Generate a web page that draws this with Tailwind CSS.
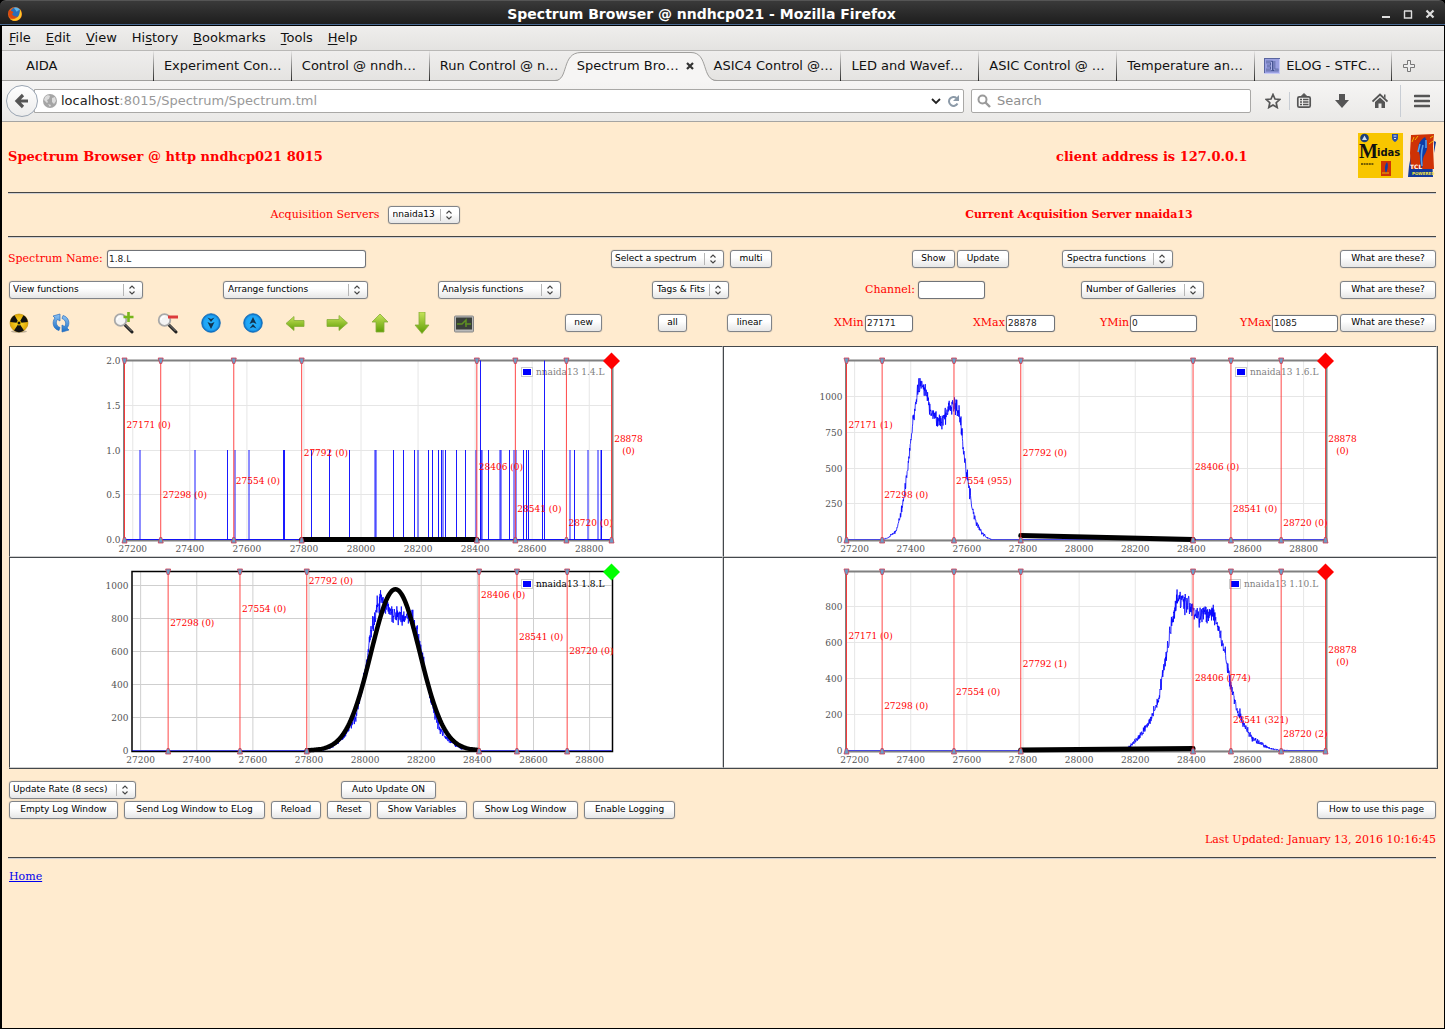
<!DOCTYPE html>
<html lang="en">
<head>
  <meta charset="UTF-8">
  <meta name="viewport" content="width=device-width, initial-scale=1.0">
  <title>Spectrum Browser @ nndhcp021</title>
  <script src="https://cdn.jsdelivr.net/npm/@tailwindcss/browser@4"></script>
</head>
<body class="bg-black font-['DejaVu_Sans',sans-serif] text-[13px] text-[#111]">

<!-- shared symbols -->
<svg class="absolute w-0 h-0" aria-hidden="true">
  <defs>
    <symbol id="updown" viewBox="0 0 20 18">
      <path d="M.5 3v12" stroke="#b5b5b5" fill="none"/>
      <path d="M6.500 7.500 9 5l2.500 2.500M6.500 10.500 9 13l2.500-2.500" stroke="#444" stroke-width="1.100" fill="none"/>
    </symbol>
    <linearGradient id="green" x1="0" y1="0" x2="0" y2="1">
      <stop offset="0" stop-color="#c6e35a"/><stop offset="1" stop-color="#5f9e06"/>
    </linearGradient>
    <linearGradient id="blue" x1="0" y1="0" x2="0" y2="1">
      <stop offset="0" stop-color="#8fc4f5"/><stop offset="1" stop-color="#1c6fc4"/>
    </linearGradient>
    <radialGradient id="disc">
      <stop offset="0" stop-color="#25b4ff"/><stop offset=".75" stop-color="#1fa4f5"/><stop offset="1" stop-color="#0b6cc0"/>
    </radialGradient>
    <radialGradient id="amber">
      <stop offset="0" stop-color="#ffe13a"/><stop offset="1" stop-color="#e0a500"/>
    </radialGradient>
    <symbol id="lens" viewBox="0 0 22 22">
      <path d="m12 13 7 7" stroke="#222" stroke-width="3" stroke-linecap="round"/>
      <path d="m12.500 13 6 6" stroke="#888" stroke-width="1"/>
      <circle cx="7.500" cy="8" r="5.800" fill="#f4f4f4" stroke="#a9a9a9" stroke-width="1.800"/>
      <path d="M4 8a3.500 3.500 0 0 1 3.500-3.500" stroke="#fff" stroke-width="1.500" fill="none"/>
    </symbol>
    <symbol id="tcl" viewBox="0 0 28 45">
      <path d="M1 33 3 22l21 2 1 20H0z" fill="#123a9c"/>
      <path d="M3 2 26 1l-1 12 1 23H3L2 20z" fill="#cf3205"/>
      <path d="M26 8l2 1-2 11z" fill="#123a9c"/>
      <path d="M17 4c-6 4-8 9-6 15s0 11 3 17c1-6 0-11 3-15 3-5 3-11 0-17z" fill="#0d3da8"/>
      <path d="M14 33c-1-7-1-14 1-21 M12 11l-2 8 M18 7l0 8" stroke="#5ba0e8" stroke-width="1.500" fill="none"/>
      <path d="M6 4 4 9 M10 3 7 7 M21 11l4-3 M22 5l3-2" stroke="#f0b400" stroke-width="1" fill="none"/>
      <text x="2" y="36" font-size="6" fill="#fff" font-family="DejaVu Sans">TCL</text>
      <text x="4" y="42" font-size="4" font-weight="bold" fill="#f6e640" font-family="DejaVu Sans">POWERED</text>
    </symbol>
  </defs>
</svg>

<div class="min-h-screen flex flex-col">

  <!-- window title -->
  <header class="h-[26px] shrink-0 flex items-center pl-2 pr-[10px] rounded-t-md border-t border-[#555] bg-linear-to-b from-[#3a3a3a] to-[#1b1b1b] shadow-[inset_0_-1px_0_#000,inset_0_-2px_0_#4a6a92]">
    <svg class="w-[14px] h-[14px]" viewBox="0 0 14 14">
      <circle cx="7" cy="7" r="7" fill="#e8661a"/>
      <circle cx="7.500" cy="5.500" r="5" fill="#2b6fb8"/>
      <path d="M6 1c2-1 5 0 6 2-2 0-3 1-3 2z" fill="#5ab6ea"/>
      <path d="M12 2.500c2 3 2.500 7-1 10-3 2-7 1.500-9-.500 4 1 8-1 9-4 .800-2 .900-4 1-5.500z" fill="#ffc928"/>
      <path d="M1 3c1 1 2 1 3 1l1.500 1.500L4 7c1 2 3 3 5 2-1 2-4 3-6 2C.500 9.500 0 6 1 3z" fill="#d9480f"/>
    </svg>
    <h1 class="flex-1 text-center text-sm leading-none font-bold text-white">Spectrum Browser @ nndhcp021 - Mozilla Firefox</h1>
    <div class="flex gap-3">
      <button aria-label="Minimize"><svg class="w-[10px] h-[10px]" viewBox="0 0 10 10"><path d="M1 8h8" stroke="#ddd" stroke-width="2"/></svg></button>
      <button aria-label="Maximize"><svg class="w-[10px] h-[10px]" viewBox="0 0 10 10"><path d="M1.500 2v7h7V2M1 2h8" stroke="#ddd" stroke-width="1.400" fill="none"/></svg></button>
      <button aria-label="Close"><svg class="w-[10px] h-[10px]" viewBox="0 0 10 10"><path d="m1.500 1.500 7 7m0-7-7 7" stroke="#ddd" stroke-width="2.200"/></svg></button>
    </div>
  </header>

  <div class="flex-1 flex flex-col border-l-2 border-r border-b border-black bg-[#ffebcf]">

    <!-- menu bar -->
    <nav class="h-[25px] flex items-center gap-[15px] pl-[7px] border-b border-[#b9b8b6] bg-linear-to-b from-[#efeeed] to-[#e4e3e1] underline-offset-2">
      <button><u>F</u>ile</button>
      <button><u>E</u>dit</button>
      <button><u>V</u>iew</button>
      <button>Hi<u>s</u>tory</button>
      <button><u>B</u>ookmarks</button>
      <button><u>T</u>ools</button>
      <button><u>H</u>elp</button>
    </nav>

    <!-- tabs -->
    <div class="h-[30px] flex pl-[14px] bg-linear-to-b from-[#efeeed] to-[#e4e3e1] shadow-[inset_0_-1px_0_#a09f9d]">
      <button class="flex-1 min-w-0 flex items-center pl-[10px] whitespace-nowrap border-r [border-image:linear-gradient(transparent,#222)_1]">AIDA</button>
      <button class="flex-1 min-w-0 flex items-center pl-[10px] whitespace-nowrap border-r [border-image:linear-gradient(transparent,#222)_1]">Experiment Con…</button>
      <button class="flex-1 min-w-0 flex items-center pl-[10px] whitespace-nowrap border-r [border-image:linear-gradient(transparent,#222)_1]">Control @ nndh…</button>
      <button class="flex-1 min-w-0 flex items-center pl-[10px] whitespace-nowrap">Run Control @ n…</button>
      <div class="flex-1 min-w-0 relative flex items-center pl-[10px] whitespace-nowrap">
        <svg class="absolute -left-3 top-0 w-[162px] h-[30px]" viewBox="0 0 162 30">
          <path d="M0 30c14 0 6-28 26-28h110c18 0 10 28 26 28z" fill="#f6f5f4"/>
          <path d="M0 29.500c14 0 6-28 26-28h110c18 0 10 28 26 28" fill="none" stroke="#a09f9d"/>
        </svg>
        <span class="relative flex-1">Spectrum Bro…</span>
        <button class="relative mr-[10px]" aria-label="Close tab"><svg class="w-2 h-2" viewBox="0 0 8 8"><path d="m1 1 6 6m0-6L1 7" stroke="#333" stroke-width="2.200"/></svg></button>
      </div>
      <button class="relative flex-1 min-w-0 flex items-center pl-[10px] whitespace-nowrap border-r [border-image:linear-gradient(transparent,#222)_1]">ASIC4 Control @…</button>
      <button class="flex-1 min-w-0 flex items-center pl-[10px] whitespace-nowrap border-r [border-image:linear-gradient(transparent,#222)_1]">LED and Wavef…</button>
      <button class="flex-1 min-w-0 flex items-center pl-[10px] whitespace-nowrap border-r [border-image:linear-gradient(transparent,#222)_1]">ASIC Control @ …</button>
      <button class="flex-1 min-w-0 flex items-center pl-[10px] whitespace-nowrap border-r [border-image:linear-gradient(transparent,#222)_1]">Temperature an…</button>
      <button class="flex-1 min-w-0 flex items-center gap-[6px] pl-[9px] whitespace-nowrap border-r [border-image:linear-gradient(transparent,#222)_1]">
        <svg class="w-4 h-4 shrink-0" viewBox="0 0 16 16">
          <rect width="16" height="16" fill="#9aa0e0"/>
          <path d="M16 0v16H0" fill="none" stroke="#c5c8f4" stroke-width="2"/>
          <path d="M0 .500h16M.500 0v15" stroke="#5a66a0"/>
          <path d="M2 4h5.500v8H2M3 8h4M10 3v9h4.500" fill="none" stroke="#3d4c8c" stroke-width="2.400"/>
          <path d="M2 4h5.500v8H2M3 8h4M10 3v9h4.500" fill="none" stroke="#b9bdf2" stroke-width=".900"/>
        </svg>
        ELOG - STFC…
      </button>
      <button class="w-[52px] flex items-center pl-[11px]" aria-label="New tab">
        <svg class="w-3 h-3" viewBox="0 0 12 12"><path d="M4.500.500h3v4h4v3h-4v4h-3v-4h-4v-3h4z" fill="#eee" stroke="#777"/></svg>
      </button>
    </div>

    <!-- location bar -->
    <div class="h-[41px] flex items-center pl-1 pr-[14px] border-b border-[#a5a4a2] bg-linear-to-b from-[#f6f5f4] to-[#eae9e7] text-[#555]">
      <button class="relative z-10 w-8 h-8 shrink-0 rounded-full border border-[#9aa5b3] bg-linear-to-b from-white to-[#ececec] flex items-center justify-center" aria-label="Back">
        <svg class="w-4 h-4" viewBox="0 0 16 16"><path d="M14 8H4M9 2 3 8l6 6" fill="none" stroke="#555" stroke-width="3.200"/></svg>
      </button>
      <div class="flex-1 h-6 -ml-1 pl-2 pr-1 flex items-center border border-[#a9a8a6] rounded-r-xs bg-white">
        <svg class="w-[14px] h-[14px] shrink-0" viewBox="0 0 14 14">
          <circle cx="7" cy="7" r="7" fill="#a5a5a5"/>
          <path d="M2 3c2-2 4-2 5-1L6 5 4 6l1 2-1 1-3-3zM9 4l3-1 1 4-2 3-2-2zM5 10l3 1-1 2z" fill="#dcdcdc"/>
        </svg>
        <!-- host part is darker than the path -->
        <div class="flex-1 pl-1 text-[#999]" role="textbox" aria-label="Address"><span class="text-[#222]">localhost</span>:8015/Spectrum/Spectrum.tml</div>
        <button aria-label="History"><svg class="w-[10px] h-[10px]" viewBox="0 0 10 10"><path d="m1 3 4 4 4-4" fill="none" stroke="#222" stroke-width="1.800"/></svg></button>
        <button class="ml-[6px]" aria-label="Reload page"><svg class="w-3 h-3" viewBox="0 0 12 12"><path d="M10.500 8.500A4.500 4.500 0 1 1 9.500 3" fill="none" stroke="#8c9aa8" stroke-width="2"/><path d="M12 0v6H6z" fill="#8c9aa8"/></svg></button>
      </div>
      <label class="ml-[7px] w-[280px] h-6 pl-[5px] flex items-center gap-[6px] border border-[#a9a8a6] rounded-xs bg-white">
        <svg class="w-[14px] h-[14px] shrink-0" viewBox="0 0 14 14"><circle cx="5.500" cy="5.500" r="4" fill="none" stroke="#9a9a9a" stroke-width="2"/><path d="m8.500 8.500 4.500 4.500" stroke="#9a9a9a" stroke-width="2.400"/></svg>
        <input type="search" aria-label="Search" placeholder="Search" class="flex-1 min-w-0 outline-none placeholder:text-[#8f8f8f]">
      </label>
      <button class="ml-[14px]" aria-label="Bookmark"><svg class="w-4 h-4" viewBox="0 0 16 16"><path d="m8 1.500 2 4.500 4.800.500-3.600 3.200 1 4.800L8 12l-4.200 2.500 1-4.800L1.200 6.500 6 6z" fill="none" stroke="#555" stroke-width="1.700"/></svg></button>
      <span class="ml-2 w-px h-[18px] bg-[#c8cdd4]"></span>
      <button class="ml-[6px]" aria-label="Bookmarks list"><svg class="w-4 h-4" viewBox="0 0 16 16"><rect x="1.800" y="3.800" width="12.400" height="10.400" rx="1.500" fill="none" stroke="#555" stroke-width="1.700"/><path d="M5 3.500 8 .500l3 3z" fill="#555" stroke="#555"/><path d="M4 6.500h2m1 0h5.500M4 9h2m1 0h5.500M4 11.500h2m1 0h5.500" stroke="#555" stroke-width="1.300"/></svg></button>
      <button class="ml-[22px]" aria-label="Downloads"><svg class="w-4 h-4" viewBox="0 0 16 16"><path d="M5 1h6v6h4l-7 8-7-8h4z" fill="#555"/></svg></button>
      <button class="ml-[22px]" aria-label="Home page"><svg class="w-4 h-4" viewBox="0 0 16 16"><path d="m.500 8.500 7.500-7 7.500 7" fill="none" stroke="#555" stroke-width="1.800"/><path d="M3 9l5-4.500L13 9v6H9.500v-4.500h-3V15H3z" fill="#555"/><path d="M12 1.500h1.500v4L12 4z" fill="#555"/></svg></button>
      <span class="ml-3 w-px h-8 bg-[#c8cdd4]"></span>
      <button class="ml-[13px]" aria-label="Menu"><svg class="w-4 h-4" viewBox="0 0 16 16"><path d="M1 3h14M1 8h14M1 13h14" stroke="#555" stroke-width="2.600" stroke-linecap="round"/></svg></button>
    </div>

    <!-- page -->
    <main class="flex-1 pl-[6px] pr-2 font-['DejaVu_Serif',serif] text-[11px] text-[#f00]">

      <div class="h-[70px] grid grid-cols-[1048fr_302fr_78fr] items-center text-[13px] font-bold">
        <h2>Spectrum Browser @ http nndhcp021 8015</h2>
        <p>client address is 127.0.0.1</p>
        <div class="flex justify-end gap-[5px] pb-[3px]">
          <svg class="w-[45px] h-[45px]" viewBox="0 0 45 45" role="img" aria-label="Midas">
            <rect width="45" height="45" fill="#f8c600"/>
            <circle cx="6.500" cy="5" r="4.300" fill="#1d3f78"/><path d="M4 7 6.500 2.500 9 7z" fill="#cfe0f4"/>
            <path d="M34 1h6v4c0 2-2 3.500-3 4-1-.500-3-2-3-4z" fill="#2c4fa8"/><path d="M35.500 3h3M36 5.500h2" stroke="#dbe6ff"/>
            <text x="1" y="25" font-family="Liberation Serif" font-size="20" fill="#111" font-weight="bold">M</text>
            <text x="19" y="23" font-family="DejaVu Sans" font-size="10" font-weight="bold" fill="#111">idas</text>
            <path d="M3 31h13" stroke="#4a3c00" stroke-width="1.500" stroke-dasharray="2 .600"/>
            <rect x="23" y="28" width="10" height="15" fill="#cf3205"/>
            <path d="M29 29c-3 4-2 8-1 12 1-4 3-8 1-12z" fill="#0d3da8"/><path d="M24 40h7" stroke="#f0b400"/>
          </svg>
          <svg class="w-[28px] h-[45px]"><use href="#tcl"/></svg>
        </div>
      </div>

      <hr class="h-[2px] border-0 border-t border-[#454545] bg-[#cfcfd2]">

      <div class="h-[42px] grid grid-cols-2 items-center">
        <div class="flex items-center justify-center gap-1">
          <label for="servers" class="w-[113px]">Acquisition Servers</label>
          <span class="relative flex text-[9px] text-black font-['DejaVu_Sans',sans-serif]">
            <select id="servers" class="appearance-none w-[72px] h-[18px] pl-1 border border-[#808388] rounded-[3px] bg-linear-to-b from-white from-40% to-[#e6e6e6] shadow-[0_0_1px_#888]"><option>nnaida13</option></select>
            <svg class="absolute right-0 top-0 w-5 h-[18px] pointer-events-none"><use href="#updown"/></svg>
          </span>
        </div>
        <p class="text-center font-bold">Current Acquisition Server nnaida13</p>
      </div>

      <hr class="h-[2px] border-0 border-t border-[#454545] bg-[#cfcfd2]">

      <div class="mt-3 flex flex-col gap-[13px]">
        <div class="h-[18px] grid grid-cols-[603fr_301fr_150fr_374fr] items-center">
          <div class="flex items-center">
            <label for="name" class="w-[99px]">Spectrum Name:</label>
            <input id="name" value="1.8.L" class="w-[259px] h-[18px] px-px text-[9px] text-[#222] font-['DejaVu_Sans',sans-serif] bg-white border border-[#707378] rounded-[3px] shadow-[0_0_1px_#888]">
          </div>
          <div class="flex gap-[6px] text-[9px] text-black font-['DejaVu_Sans',sans-serif]">
            <span class="relative flex">
              <select aria-label="Select a spectrum" class="appearance-none w-[113px] h-[18px] pl-[3px] border border-[#808388] rounded-[3px] bg-linear-to-b from-white from-40% to-[#e6e6e6] shadow-[0_0_1px_#888]"><option>Select a spectrum</option></select>
              <svg class="absolute right-0 top-0 w-5 h-[18px] pointer-events-none"><use href="#updown"/></svg>
            </span>
            <button class="w-[42px] h-[18px] border border-[#808388] rounded-[3px] bg-linear-to-b from-white from-40% to-[#e6e6e6] shadow-[0_0_1px_#888]">multi</button>
          </div>
          <div class="flex gap-[2px] text-[9px] text-black font-['DejaVu_Sans',sans-serif]">
            <button class="w-[43px] h-[18px] border border-[#808388] rounded-[3px] bg-linear-to-b from-white from-40% to-[#e6e6e6] shadow-[0_0_1px_#888]">Show</button>
            <button class="w-[52px] h-[18px] border border-[#808388] rounded-[3px] bg-linear-to-b from-white from-40% to-[#e6e6e6] shadow-[0_0_1px_#888]">Update</button>
          </div>
          <div class="flex justify-between text-[9px] text-black font-['DejaVu_Sans',sans-serif]">
            <span class="relative flex">
              <select aria-label="Spectra functions" class="appearance-none w-[111px] h-[18px] pl-1 border border-[#808388] rounded-[3px] bg-linear-to-b from-white from-40% to-[#e6e6e6] shadow-[0_0_1px_#888]"><option>Spectra functions</option></select>
              <svg class="absolute right-0 top-0 w-5 h-[18px] pointer-events-none"><use href="#updown"/></svg>
            </span>
            <button class="w-24 h-[18px] border border-[#808388] rounded-[3px] bg-linear-to-b from-white from-40% to-[#e6e6e6] shadow-[0_0_1px_#888]">What are these?</button>
          </div>
        </div>

        <div class="h-[18px] grid grid-cols-[215fr_215fr_214fr_213fr_216fr_355fr] items-center">
          <div class="relative flex w-fit ml-px text-[9px] text-black font-['DejaVu_Sans',sans-serif]">
            <select aria-label="View functions" class="appearance-none w-[134px] h-[18px] pl-[3px] border border-[#808388] rounded-[3px] bg-linear-to-b from-white from-40% to-[#e6e6e6] shadow-[0_0_1px_#888]"><option>View functions</option></select>
            <svg class="absolute right-0 top-0 w-5 h-[18px] pointer-events-none"><use href="#updown"/></svg>
          </div>
          <div class="relative flex w-fit text-[9px] text-black font-['DejaVu_Sans',sans-serif]">
            <select aria-label="Arrange functions" class="appearance-none w-[145px] h-[18px] pl-1 border border-[#808388] rounded-[3px] bg-linear-to-b from-white from-40% to-[#e6e6e6] shadow-[0_0_1px_#888]"><option>Arrange functions</option></select>
            <svg class="absolute right-0 top-0 w-5 h-[18px] pointer-events-none"><use href="#updown"/></svg>
          </div>
          <div class="relative flex w-fit text-[9px] text-black font-['DejaVu_Sans',sans-serif]">
            <select aria-label="Analysis functions" class="appearance-none w-[123px] h-[18px] pl-[3px] border border-[#808388] rounded-[3px] bg-linear-to-b from-white from-40% to-[#e6e6e6] shadow-[0_0_1px_#888]"><option>Analysis functions</option></select>
            <svg class="absolute right-0 top-0 w-5 h-[18px] pointer-events-none"><use href="#updown"/></svg>
          </div>
          <div class="relative flex w-fit text-[9px] text-black font-['DejaVu_Sans',sans-serif]">
            <select aria-label="Tags and fits" class="appearance-none w-[77px] h-[18px] pl-1 border border-[#808388] rounded-[3px] bg-linear-to-b from-white from-40% to-[#e6e6e6] shadow-[0_0_1px_#888]"><option>Tags &amp; Fits</option></select>
            <svg class="absolute right-0 top-0 w-5 h-[18px] pointer-events-none"><use href="#updown"/></svg>
          </div>
          <div class="flex items-center">
            <label for="channel" class="w-[53px]">Channel:</label>
            <input id="channel" class="w-[67px] h-[18px] px-px text-[9px] text-[#222] font-['DejaVu_Sans',sans-serif] bg-white border border-[#707378] rounded-[3px] shadow-[0_0_1px_#888]">
          </div>
          <div class="flex justify-between text-[9px] text-black font-['DejaVu_Sans',sans-serif]">
            <span class="relative flex">
              <select aria-label="Number of Galleries" class="appearance-none w-[123px] h-[18px] pl-1 border border-[#808388] rounded-[3px] bg-linear-to-b from-white from-40% to-[#e6e6e6] shadow-[0_0_1px_#888]"><option>Number of Galleries</option></select>
              <svg class="absolute right-0 top-0 w-5 h-[18px] pointer-events-none"><use href="#updown"/></svg>
            </span>
            <button class="w-24 h-[18px] border border-[#808388] rounded-[3px] bg-linear-to-b from-white from-40% to-[#e6e6e6] shadow-[0_0_1px_#888]">What are these?</button>
          </div>
        </div>

        <div class="h-5 grid grid-cols-[557fr_93fr_69fr_107fr_139fr_127fr_140fr_196fr] items-center">
          <div class="flex items-center pl-px">
            <div class="flex w-[104px] gap-[22px]">
              <button aria-label="Radiation"><svg class="w-5 h-5" viewBox="0 0 20 20">
                <ellipse cx="10" cy="18.500" rx="8" ry="1.500" fill="#000" opacity=".25"/>
                <circle cx="10" cy="10" r="9" fill="url(#amber)" stroke="#b58a00" stroke-width=".600"/>
                <path d="M10 10 1.200 9A9 9 0 0 1 5.500 2.200zM10 10l4.500-7.800A9 9 0 0 1 18.800 9zM10 10l5 7.500a9 9 0 0 1-10 0z" fill="#111"/>
                <circle cx="10" cy="10" r="2" fill="#111" stroke="#f5c800"/>
              </svg></button>
              <button aria-label="Refresh"><svg class="w-5 h-5" viewBox="0 0 20 20">
                <path d="M8 17.500C2 16 .500 9 4 5L2 3l7-2v7L6.500 6.500C4.500 9 5 13 9 14.500z" fill="url(#blue)" stroke="#2a6fc0" stroke-width=".700"/>
                <path d="M12 2.500c6 1.500 7.500 8.500 4 12.500l2 2-7 2v-7l2.500 1.500C15.500 11 15 7 11 5.500z" fill="url(#blue)" stroke="#2a6fc0" stroke-width=".700"/>
              </svg></button>
            </div>
            <div class="flex w-[361px] items-center justify-between">
              <button aria-label="Zoom in"><svg class="w-[22px] h-[22px]" viewBox="0 0 22 22"><use href="#lens"/><path d="M15.500 0v10M10.500 5h10" stroke="#76b51b" stroke-width="2.600"/></svg></button>
              <button aria-label="Zoom out"><svg class="w-[22px] h-[22px]" viewBox="0 0 22 22"><use href="#lens"/><path d="M11 5h10" stroke="#dd3b3b" stroke-width="3"/></svg></button>
              <button aria-label="Contract"><svg class="w-5 h-5" viewBox="0 0 20 20"><circle cx="10" cy="10" r="9.300" fill="url(#disc)" stroke="#0a66b5" stroke-width=".800"/><path d="M6.500 4.500 10 9l3.500-4.500L10 6zM6.500 9 10 16l3.500-7-3.500 1.500z" fill="#123450"/></svg></button>
              <button aria-label="Expand"><svg class="w-5 h-5" viewBox="0 0 20 20"><circle cx="10" cy="10" r="9.300" fill="url(#disc)" stroke="#0a66b5" stroke-width=".800"/><path d="M6.500 15.500 10 11l3.500 4.500L10 14zM6.500 11 10 4l3.500 7L10 9.500z" fill="#123450"/></svg></button>
              <button aria-label="Left"><svg class="w-5 h-5" viewBox="0 0 20 20"><path d="M1 10.500 9 3.500v4h10v6H9v4z" fill="url(#green)" stroke="#86ad3a" stroke-width=".800"/></svg></button>
              <button aria-label="Right"><svg class="w-[22px] h-5" viewBox="0 0 22 20"><path d="M21.500 10 13 2.500v4H1v7h12v4z" fill="url(#green)" stroke="#86ad3a" stroke-width=".800"/></svg></button>
              <button aria-label="Up"><svg class="w-5 h-5" viewBox="0 0 20 20"><path d="M10 1 2 9h4v10h8V9h4z" fill="url(#green)" stroke="#86ad3a" stroke-width=".800"/></svg></button>
              <button aria-label="Down"><svg class="w-5 h-[22px]" viewBox="0 0 20 22"><path d="M10 21.500 3 13h4V0h6v13h4z" fill="url(#green)" stroke="#86ad3a" stroke-width=".800"/></svg></button>
              <button aria-label="Monitor"><svg class="w-5 h-5" viewBox="0 0 20 20"><rect x=".500" y="3" width="19" height="16" rx="1" fill="#b9b9b9" stroke="#888"/><rect x="2" y="4.500" width="16" height="12" fill="#3a3f3a"/><path d="M3 11h5l4-4v7M11 11h6" fill="none" stroke="#5d8f22" stroke-width="1.500"/></svg></button>
            </div>
          </div>
          <button class="w-[37px] h-[18px] text-[9px] text-black font-['DejaVu_Sans',sans-serif] border border-[#808388] rounded-[3px] bg-linear-to-b from-white from-40% to-[#e6e6e6] shadow-[0_0_1px_#888]">new</button>
          <button class="w-[29px] h-[18px] text-[9px] text-black font-['DejaVu_Sans',sans-serif] border border-[#808388] rounded-[3px] bg-linear-to-b from-white from-40% to-[#e6e6e6] shadow-[0_0_1px_#888]">all</button>
          <button class="w-[45px] h-[18px] text-[9px] text-black font-['DejaVu_Sans',sans-serif] border border-[#808388] rounded-[3px] bg-linear-to-b from-white from-40% to-[#e6e6e6] shadow-[0_0_1px_#888]">linear</button>
          <div class="flex items-center">
            <label for="xmin" class="w-[31px]">XMin</label>
            <input id="xmin" value="27171" class="w-12 h-[17px] px-px text-[9px] text-[#222] font-['DejaVu_Sans',sans-serif] bg-white border border-[#707378] rounded-[3px] shadow-[0_0_1px_#888]">
          </div>
          <div class="flex items-center">
            <label for="xmax" class="w-[33px]">XMax</label>
            <input id="xmax" value="28878" class="w-[49px] h-[17px] px-px text-[9px] text-[#222] font-['DejaVu_Sans',sans-serif] bg-white border border-[#707378] rounded-[3px] shadow-[0_0_1px_#888]">
          </div>
          <div class="flex items-center">
            <label for="ymin" class="w-[30px]">YMin</label>
            <input id="ymin" value="0" class="w-[67px] h-[17px] px-px text-[9px] text-[#222] font-['DejaVu_Sans',sans-serif] bg-white border border-[#707378] rounded-[3px] shadow-[0_0_1px_#888]">
          </div>
          <div class="flex items-center">
            <label for="ymax" class="w-8">YMax</label>
            <input id="ymax" value="1085" class="w-[66px] h-[17px] px-px text-[9px] text-[#222] font-['DejaVu_Sans',sans-serif] bg-white border border-[#707378] rounded-[3px] shadow-[0_0_1px_#888]">
            <button class="ml-auto w-24 h-[18px] text-[9px] text-black font-['DejaVu_Sans',sans-serif] border border-[#808388] rounded-[3px] bg-linear-to-b from-white from-40% to-[#e6e6e6] shadow-[0_0_1px_#888]">What are these?</button>
          </div>
        </div>
      </div>

      <!-- gallery -->
      <div id="gallery" class="mt-[14px] ml-px -mr-0.5 grid grid-cols-2 border-r border-b border-[#44484c] bg-white">
        <div class="border border-t-[#44484c] border-l-[#44484c] border-r-[#d0d0d0] border-b-[#d0d0d0]"><svg class="block w-[712px] h-[209px] max-w-full overflow-visible"></svg></div>
        <div class="border border-t-[#44484c] border-l-[#44484c] border-r-[#d0d0d0] border-b-[#d0d0d0]"><svg class="block w-[712px] h-[209px] max-w-full overflow-visible"></svg></div>
        <div class="border border-t-[#44484c] border-l-[#44484c] border-r-[#d0d0d0] border-b-[#d0d0d0]"><svg class="block w-[712px] h-[209px] max-w-full overflow-visible"></svg></div>
        <div class="border border-t-[#44484c] border-l-[#44484c] border-r-[#d0d0d0] border-b-[#d0d0d0]"><svg class="block w-[712px] h-[209px] max-w-full overflow-visible"></svg></div>
      </div>

      <div class="mt-3 flex flex-col gap-[2px] text-[9px] text-black font-['DejaVu_Sans',sans-serif]">
        <div class="grid grid-cols-[333fr_1095fr]">
          <div class="relative flex w-fit ml-px">
            <select aria-label="Update rate" class="appearance-none w-[127px] h-[18px] pl-[3px] border border-[#808388] rounded-[3px] bg-linear-to-b from-white from-40% to-[#e6e6e6] shadow-[0_0_1px_#888]"><option>Update Rate (8 secs)</option></select>
            <svg class="absolute right-0 top-0 w-5 h-[18px] pointer-events-none"><use href="#updown"/></svg>
          </div>
          <button class="w-[95px] h-[18px] border border-[#808388] rounded-[3px] bg-linear-to-b from-white from-40% to-[#e6e6e6] shadow-[0_0_1px_#888]">Auto Update ON</button>
        </div>
        <div class="flex gap-[6px] pl-px">
          <button class="w-[109px] h-[18px] border border-[#808388] rounded-[3px] bg-linear-to-b from-white from-40% to-[#e6e6e6] shadow-[0_0_1px_#888]">Empty Log Window</button>
          <button class="w-[141px] h-[18px] border border-[#808388] rounded-[3px] bg-linear-to-b from-white from-40% to-[#e6e6e6] shadow-[0_0_1px_#888]">Send Log Window to ELog</button>
          <button class="w-[50px] h-[18px] border border-[#808388] rounded-[3px] bg-linear-to-b from-white from-40% to-[#e6e6e6] shadow-[0_0_1px_#888]">Reload</button>
          <button class="w-11 h-[18px] border border-[#808388] rounded-[3px] bg-linear-to-b from-white from-40% to-[#e6e6e6] shadow-[0_0_1px_#888]">Reset</button>
          <button class="w-[90px] h-[18px] border border-[#808388] rounded-[3px] bg-linear-to-b from-white from-40% to-[#e6e6e6] shadow-[0_0_1px_#888]">Show Variables</button>
          <button class="w-[105px] h-[18px] border border-[#808388] rounded-[3px] bg-linear-to-b from-white from-40% to-[#e6e6e6] shadow-[0_0_1px_#888]">Show Log Window</button>
          <button class="w-[91px] h-[18px] border border-[#808388] rounded-[3px] bg-linear-to-b from-white from-40% to-[#e6e6e6] shadow-[0_0_1px_#888]">Enable Logging</button>
          <button class="ml-auto w-[119px] h-[18px] border border-[#808388] rounded-[3px] bg-linear-to-b from-white from-40% to-[#e6e6e6] shadow-[0_0_1px_#888]">How to use this page</button>
        </div>
      </div>

      <p class="mt-[13px] mb-[9px] leading-4 text-right">Last Updated: January 13, 2016 10:16:45</p>
      <hr class="h-[2px] border-0 border-t border-[#454545] bg-[#cfcfd2]">
      <a href="#" class="block w-fit mt-[10px] ml-px leading-4 text-[#00e] underline">Home</a>
    </main>
  </div>
</div>

<script>
// plot box inside each svg; channels run from 27171 to 28878
const CH0 = 27171, CH1 = 28878, TOP = 13.5, BOTTOM = 192.5, RIGHT = 601.5;
const labelY = {27171:81, 27298:151, 27554:137, 27792:109, 28406:123, 28541:165, 28720:179, 28878:95};

const spectra = [
  {
    name:'nnaida13 1.4.L', left:114.5, unit:89.5, grid:'#e6e6e6', frame:'#808080', diamond:'#f00', legendX:511, legendY:24,
    ticks:[[0,'0.0'],[.5,'0.5'],[1,'1.0'],[1.5,'1.5'],[2,'2.0']],
    tags:{27171:0, 27298:0, 27554:0, 27792:0, 28406:0, 28541:0, 28720:0, 28878:0},
    // svg x of each one-count line, then of the two-count ones
    hits:[130,185,217.5,225,239,273.5,274.5,301.5,319.5,339.5,365,366,383.5,393.5,404.5,408,418.5,422.5,428.5,431.5,433,435.5,446.5,455.5,466,471,472,478.5,490,491,499.5,504,506,513.5,516.5,518.5,532.5,560,564.5,578,588,591,591.5],
    doubles:[470.5,534.5],
    fit:[[27792,0],[28406,0]]
  },
  {
    name:'nnaida13 1.6.L', left:122.5, unit:.143, grid:'#e6e6e6', frame:'#808080', diamond:'#f00', legendX:511, legendY:24,
    ticks:[[0,'0'],[250,'250'],[500,'500'],[750,'750'],[1000,'1000']],
    tags:{27171:1, 27298:0, 27554:955, 27792:0, 28406:0, 28541:0, 28720:0, 28878:0},
    curve:[[27171,0],[27299,0],[27317,10],[27332,30],[27348,63],[27362,150],[27376,300],[27388,465],[27401,700],[27413,900],[27424,1040],[27433,1090],[27445,1075],[27457,1010],[27469,930],[27481,860],[27495,835],[27510,825],[27522,865],[27534,910],[27546,950],[27555,955],[27566,915],[27579,810],[27587,650],[27599,490],[27609,335],[27619,230],[27632,125],[27653,48],[27670,15],[27688,0],[28878,0]],
    fit:[[27792,28],[28406,0]]
  },
  {
    name:'nnaida13 1.8.L', left:122.5, unit:.1646, grid:'#cfcfcf', frame:'#000', diamond:'#0f0', legendX:511, legendY:25, shift:-83, active:true,
    ticks:[[0,'0'],[200,'200'],[400,'400'],[600,'600'],[800,'800'],[1000,'1000']],
    tags:{27298:0, 27554:0, 27792:0, 28406:0, 28541:0, 28720:0},
    curve:[[27171,0],[27826,0],[27875,18],[27924,80],[27967,205],[27991,400],[28004,530],[28016,670],[28028,770],[28040,850],[28056,920],[28067,900],[28083,865],[28095,835],[28114,820],[28132,805],[28150,820],[28169,800],[28181,740],[28193,670],[28206,560],[28218,430],[28242,250],[28267,125],[28297,60],[28340,15],[28389,0],[28878,0]],
    gauss:{mean:28108, sigma:87, peak:980}
  },
  {
    name:'nnaida13 1.10.L', left:122.5, unit:.1806, grid:'#e6e6e6', frame:'#808080', diamond:'#f00', legendX:505, legendY:25,
    ticks:[[0,'0'],[200,'200'],[400,'400'],[600,'600'],[800,'800']],
    tags:{27171:0, 27298:0, 27554:0, 27792:1, 28406:774, 28541:321, 28720:2, 28878:0},
    curve:[[27171,0],[28120,0],[28157,5],[28181,22],[28199,48],[28228,104],[28258,178],[28282,270],[28300,437],[28317,567],[28329,705],[28341,790],[28355,850],[28377,835],[28395,798],[28412,750],[28430,742],[28448,745],[28475,765],[28489,720],[28507,620],[28525,490],[28543,350],[28561,235],[28584,150],[28614,76],[28644,39],[28679,11],[28715,2],[28750,0],[28878,0]],
    fit:[[27792,3],[28406,11]]
  }
];

let seed = 7;
function rnd(){ seed = (seed*16807) % 2147483647; return seed/2147483647; }
function normal(){ return Math.sqrt(-2*Math.log(rnd()))*Math.cos(6.2832*rnd()); }

function draw(svg, s){
  const x = ch => s.left + (ch-CH0)*(RIGHT-s.left)/(CH1-CH0);
  const y = n => BOTTOM - n*s.unit;
  let out = '';
  for(let ch=27200; ch<=28800; ch+=200){
    out += `<path d="M${x(ch)} ${TOP}V${BOTTOM}" stroke="${s.grid}"/>`;
    out += `<text x="${x(ch)}" y="205" text-anchor="middle" fill="#545454">${ch}</text>`;
  }
  s.ticks.forEach(([n,t])=>{
    out += `<path d="M${s.left} ${Math.floor(y(n))+.5}H${RIGHT}" stroke="${s.grid}"/>`;
    out += `<text x="${s.left-4}" y="${Math.floor(y(n))+4}" text-anchor="end" fill="#545454">${t}</text>`;
  });
  out += `<rect x="${s.left-.5}" y="${TOP}" width="${RIGHT-s.left+1.5}" height="${BOTTOM-TOP+1}" fill="none" stroke="${s.frame}" stroke-width="${s.active ? 1.5 : 2}"/>`;
  out += `<rect x="${s.legendX+.5}" y="${s.legendY-3.5}" width="11" height="9" fill="#fff" stroke="#ccc"/><rect x="${s.legendX+2}" y="${s.legendY-2}" width="8" height="6" fill="#00f"/>`;
  out += `<text x="${s.legendX+15}" y="${s.legendY+4}" fill="${s.active ? '#000' : '#808080'}">${s.name}</text>`;

  if(s.hits){
    out += `<path d="M${s.left} ${BOTTOM}H${RIGHT}${s.hits.map(h=>`M${h} ${BOTTOM}V${y(1)}`).join('')}${s.doubles.map(h=>`M${h} ${BOTTOM}V${y(2)}`).join('')}" stroke="#00f" fill="none" stroke-width=".9"/>`;
  } else {
    // counts fluctuate by about the square root of their mean
    let d = '', k = 0;
    for(let ch=CH0; ch<=CH1; ch++){
      while(k < s.curve.length-2 && ch > s.curve[k+1][0]) k++;
      const [a,p] = s.curve[k], [b,q] = s.curve[k+1];
      const mean = p + (q-p)*(ch-a)/(b-a);
      d += (d ? 'L' : 'M') + x(ch).toFixed(2) + ' ' + y(Math.max(0, mean + normal()*Math.sqrt(mean))).toFixed(1);
    }
    out += `<path d="${d}" stroke="#00f" fill="none" stroke-width=".8"/>`;
  }

  let fit = '';
  if(s.gauss){
    const g = s.gauss;
    for(let ch=27792; ch<=28406; ch+=4) fit += (fit ? 'L' : 'M') + x(ch) + ' ' + y(g.peak*Math.exp(-((ch-g.mean)**2)/(2*g.sigma**2)));
  } else {
    fit = `M${x(s.fit[0][0])} ${y(s.fit[0][1])}L${x(s.fit[1][0])} ${y(s.fit[1][1])}`;
  }
  out += `<path d="${fit}" stroke="#000" stroke-width="${s.gauss ? 4.5 : 5}" stroke-linecap="round" fill="none"/>`;

  Object.keys(s.tags).forEach(ch=>{
    const px = x(+ch), ly = labelY[ch] + (s.shift || 0);
    out += `<path d="M${px} ${TOP}V${BOTTOM}" stroke="#f33" stroke-width=".9"/>`;
    out += `<path d="M${px-2.5} 11h5l-1.500 5.500h-2zM${px-2.5} 196h5l-1.500-5.500h-2z" fill="#6a9fc8" stroke="#d23b50" stroke-width=".8"/>`;
    if(ch == CH1){
      out += `<text x="${px+17}" y="${ly}" text-anchor="middle" fill="#f00">${ch}</text><text x="${px+17}" y="${ly+12}" text-anchor="middle" fill="#f00">(${s.tags[ch]})</text>`;
    } else {
      out += `<text x="${px+2}" y="${ly}" fill="#f00">${ch} (${s.tags[ch]})</text>`;
    }
  });
  out += `<path d="M${RIGHT} 5.500l8.500 8.500-8.500 8.500-8.500-8.500z" fill="${s.diamond}"/>`;
  svg.innerHTML = `<g font-family="DejaVu Serif" font-size="9">${out}</g>`;
}
document.querySelectorAll('#gallery svg').forEach((svg,i)=>draw(svg, spectra[i]));
</script>
</body>
</html>
